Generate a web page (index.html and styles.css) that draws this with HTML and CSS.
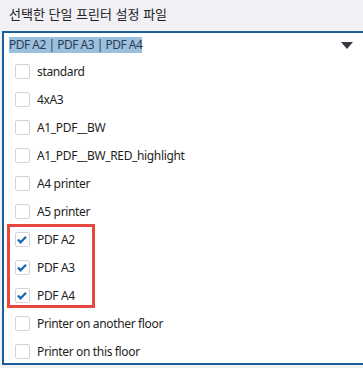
FILE: index.html
```html
<!DOCTYPE html>
<html lang="ko">
<head>
<meta charset="UTF-8">
<meta name="viewport" content="width=device-width, initial-scale=1.0">
<title>프린터 설정</title>
<link rel="stylesheet" href="styles.css">
</head>
<body>

<div class="field-label">선택한 단일 프린터 설정 파일</div>

<div class="combo">
    <div class="combo-input">
        <span class="selected-text">PDF A2 | PDF A3 | PDF A4</span>
        <span class="arrow"></span>
    </div>

    <div class="option-list">
        <div class="option"><span class="check"></span>standard</div>
        <div class="option"><span class="check"></span>4xA3</div>
        <div class="option"><span class="check"></span>A1_PDF__BW</div>
        <div class="option"><span class="check"></span>A1_PDF__BW_RED_highlight</div>
        <div class="option"><span class="check"></span>A4 printer</div>
        <div class="option"><span class="check"></span>A5 printer</div>
        <div class="option"><span class="check"><svg viewBox="0 0 13 13"><polyline points="2,6.5 4.5,9.3 10,3.8"/></svg></span>PDF A2</div>
        <div class="option"><span class="check"><svg viewBox="0 0 13 13"><polyline points="2,6.5 4.5,9.3 10,3.8"/></svg></span>PDF A3</div>
        <div class="option"><span class="check"><svg viewBox="0 0 13 13"><polyline points="2,6.5 4.5,9.3 10,3.8"/></svg></span>PDF A4</div>
        <div class="option"><span class="check"></span>Printer on another floor</div>
        <div class="option"><span class="check"></span>Printer on this floor</div>
    </div>

    <!-- highlight around the selected items -->
    <div class="mark-box"></div>
</div>

</body>
</html>
```

FILE: styles.css
```css
body {
    font-family: "Noto Sans", "Noto Sans CJK KR", sans-serif;
    margin: 0;
    background-color: #f0f0f5;
    color: #1e1e1e;
    overflow: hidden;
}

.field-label {
    font-family: "Noto Sans CJK KR", sans-serif;
    font-size: 13px;
    line-height: 18px;
    padding: 5px 0 0 9px;
    height: 26px;
    color: #222;
}

/* Combo box with open list */
.combo {
    position: relative;
    margin-left: 2px;
    background-color: white;
    border-top: 2px solid #1b5e9e;
    border-left: 2px solid #1b5e9e;
    border-bottom: 2px solid #1b5e9e;
}

.combo-input {
    display: flex;
    align-items: center;
    height: 24px;
    padding-left: 5px;
}

.selected-text {
    background-color: #9bc0dd;
    color: #2d3b57;
    font-size: 12px;
    letter-spacing: -0.5px;
    line-height: 16px;
}

.arrow {
    margin-left: auto;
    margin-right: 10px;
    width: 0;
    height: 0;
    border-left: 6px solid transparent;
    border-right: 6px solid transparent;
    border-top: 7px solid #3a3a45;
}

.option-list {
    height: 305px;
    overflow: hidden;
    padding-top: 0.5px;
}

.option {
    display: flex;
    align-items: center;
    height: 28px;
    padding-left: 11px;
    font-size: 12px;
    letter-spacing: -0.35px;
}

.check {
    width: 15px;
    height: 15px;
    box-sizing: border-box;
    border: 1px solid #d4d4d8;
    border-radius: 2px;
    background-color: white;
    margin-right: 7px;
    flex-shrink: 0;
}

.check svg {
    display: block;
    width: 13px;
    height: 13px;
}

.check svg polyline {
    fill: none;
    stroke: #1767b0;
    stroke-width: 2.2;
}

.mark-box {
    position: absolute;
    left: 3px;
    top: 191px;
    width: 88px;
    height: 84px;
    box-sizing: border-box;
    border: 3px solid #e8473f;
}
```
